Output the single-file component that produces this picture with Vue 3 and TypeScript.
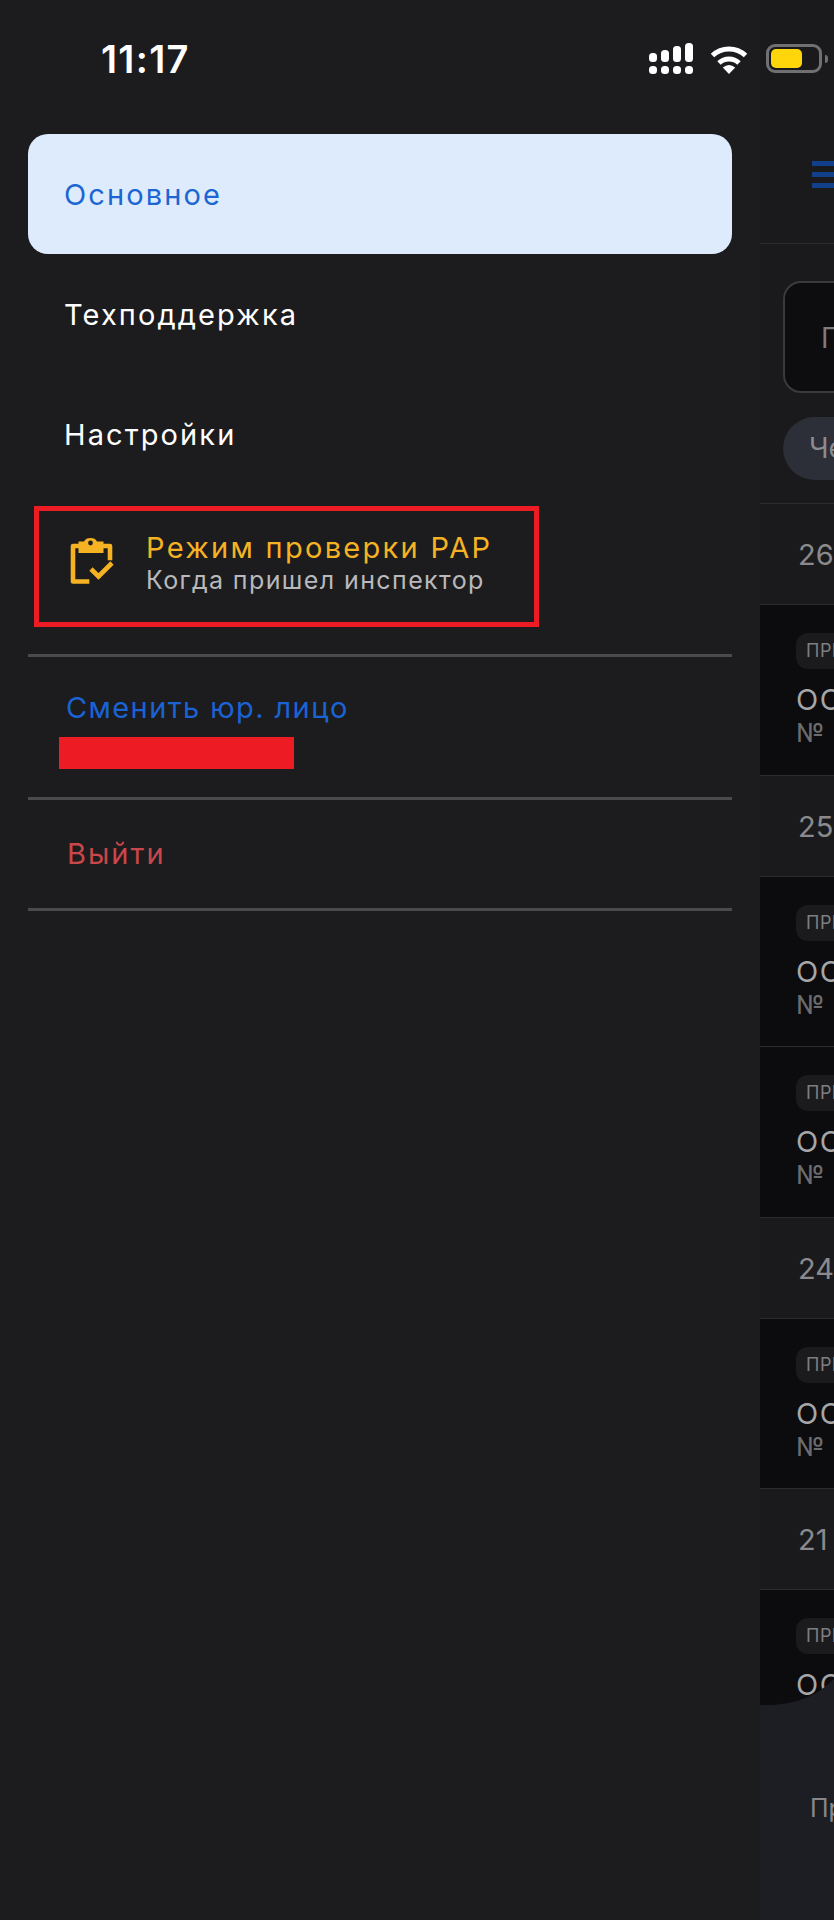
<script setup lang="ts">
interface Row { kind: 'date' | 'card'; label: string }
const menu: string[] = ['Техподдержка', 'Настройки']
const rows: Row[] = [
  { kind: 'date', label: '26' },
  { kind: 'card', label: '№' },
  { kind: 'date', label: '25' },
  { kind: 'card', label: '№' },
  { kind: 'card', label: '№' },
  { kind: 'date', label: '24' },
  { kind: 'card', label: '№' },
  { kind: 'date', label: '21' },
  { kind: 'card', label: '№' }
]
const signalBars: number[] = [9, 12, 16, 19]
</script>

<template>
  <div class="screen">
    <aside class="drawer">
      <div class="item active">Основное</div>
      <div v-for="m in menu" :key="m" class="item">{{ m }}</div>

      <div class="pap">
        <svg class="pap-icon" width="45" height="46" viewBox="0 0 45 46" fill="none">
          <path d="M17 43.5H3V8H40V20" stroke="#f5b324" stroke-width="4.6" stroke-linejoin="round" stroke-linecap="square" />
          <path d="M8.500 3.500H14A7 5.500 0 0 1 27 3.500H33.500V15H8.500Z" fill="#f5b324" />
          <circle cx="20.500" cy="5" r="2.400" fill="#1c1c1e" />
          <path d="M21 31L28.500 38.500 42 25" stroke="#f5b324" stroke-width="4.600" />
        </svg>
        <div class="pap-text">
          <div class="pap-title">Режим проверки РАР</div>
          <div class="pap-sub">Когда пришел инспектор</div>
        </div>
      </div>

      <div class="switch">
        <div class="switch-link">Сменить юр. лицо</div>
        <div class="redacted"></div>
      </div>
      <div class="logout">Выйти</div>
    </aside>

    <main class="page">
      <header class="page-head">
        <span class="burger"><i></i><i></i><i></i></span>
      </header>
      <div class="filters">
        <div class="search">П</div>
        <div class="chip">Че</div>
      </div>
      <section class="list">
        <template v-for="(r, i) in rows" :key="i">
          <div v-if="r.kind === 'date'" class="date">{{ r.label }}</div>
          <div v-else class="card">
            <span class="tag">ПРИ</span>
            <div class="org">ОО</div>
            <div class="num">{{ r.label }}</div>
          </div>
        </template>
      </section>
      <footer class="nav">
        <svg class="nav-curve" width="74" height="27" viewBox="0 0 74 27">
          <path d="M0 27V26H6C30 26 54 20 74 0V27Z" fill="#1d1e23" />
        </svg>
        <span class="nav-label">Пр</span>
      </footer>
    </main>

    <div class="status">
      <span class="time">11:17</span>
      <div class="status-icons">
        <div class="signal">
          <div class="signal-top">
            <i v-for="h in signalBars" :key="h" :style="{ height: h + 'px' }"></i>
          </div>
          <div class="signal-bottom">
            <i v-for="h in signalBars" :key="h"></i>
          </div>
        </div>
        <svg class="wifi" width="38" height="29" viewBox="0 0 38 29" fill="none">
          <path d="M2.500 10.500A24 24 0 0 1 35.500 10.500" stroke="#fff" stroke-width="5" />
          <path d="M9 18A14.500 14.500 0 0 1 29 18" stroke="#fff" stroke-width="5" />
          <path d="M19 29L12.800 22.500Q19 17.500 25.200 22.500Z" fill="#fff" />
        </svg>
        <div class="battery"><span class="battery-fill"></span></div>
        <span class="battery-nub"></span>
      </div>
    </div>
  </div>
</template>

<style>
html, body { margin: 0; background: #1c1c1e; }
</style>

<style scoped>
.screen {
  position: relative;
  display: flex;
  width: 834px;
  height: 1920px;
  overflow: hidden;
  background: #1c1c1e;
  font-family: Inter, "Noto Sans", sans-serif;
}
.drawer {
  width: 760px;
  flex: none;
  box-sizing: border-box;
  padding: 134px 28px 0;
  background: #1c1c1e;
}
.item {
  display: flex;
  align-items: center;
  height: 120px;
  padding-left: 36px;
  font-size: 29px;
  letter-spacing: 2.100px;
  color: #fff;
}
.item.active {
  background: #deebfd;
  border-radius: 20px;
  color: #1a66d2;
}
.pap {
  display: flex;
  align-items: center;
  box-sizing: border-box;
  width: 505px;
  height: 121px;
  margin: 12px 0 27px 6px;
  padding: 0 0 6px 31px;
  border: 5px solid #ed1c24;
}
.pap-icon { flex: none; margin: 0 31px 6px 0; }
.pap-title {
  font-size: 29px;
  line-height: 34px;
  letter-spacing: 2.300px;
  color: #f5b324;
  white-space: nowrap;
}
.pap-sub {
  font-size: 25px;
  line-height: 31px;
  letter-spacing: 1.400px;
  color: #b9b9bb;
  white-space: nowrap;
}
.switch {
  box-sizing: border-box;
  height: 143px;
  padding: 34px 0 0 38px;
  border-top: 3px solid #4a4a4c;
}
.switch-link {
  font-size: 29px;
  line-height: 34px;
  letter-spacing: 1.400px;
  color: #1a63d4;
}
.redacted {
  width: 235px;
  height: 32px;
  margin: 12px 0 0 -7px;
  background: #ed1c24;
}
.logout {
  box-sizing: border-box;
  height: 114px;
  padding: 37px 0 0 39px;
  border-top: 3px solid #4a4a4c;
  border-bottom: 3px solid #4a4a4c;
  font-size: 29px;
  line-height: 34px;
  letter-spacing: 2px;
  color: #c9474a;
}
.page {
  display: flex;
  flex-direction: column;
  width: 74px;
  flex: none;
  background: #1a1a1c;
  white-space: nowrap;
  overflow: hidden;
}
.page-head {
  box-sizing: border-box;
  height: 244px;
  padding: 161px 0 0 52px;
  border-bottom: 1.500px solid #2c2c2e;
}
.burger { display: flex; flex-direction: column; gap: 6.500px; width: 22px; }
.burger i { display: block; height: 4.500px; background: #123f8a; }
.filters {
  box-sizing: border-box;
  height: 260px;
  padding: 37px 0 0 23px;
  border-bottom: 1.500px solid #2c2c2e;
}
.search {
  box-sizing: border-box;
  width: 120px;
  height: 112px;
  padding: 38px 0 0 36px;
  border: 2px solid #3a3a3c;
  border-radius: 18px;
  background: #0d0d0f;
  color: #7c7c7e;
  font-size: 28px;
  line-height: 34px;
}
.chip {
  box-sizing: border-box;
  width: 120px;
  height: 63px;
  margin-top: 24px;
  padding: 14px 0 0 26px;
  border-radius: 32px;
  background: #2c2e38;
  color: #8a8a90;
  font-size: 28px;
  line-height: 34px;
}
.list { height: 1202px; flex: none; overflow: hidden; }
.date {
  box-sizing: border-box;
  height: 101px;
  padding: 33px 0 0 38px;
  border-bottom: 1.500px solid #2c2c2e;
  color: #8a8a8c;
  font-size: 29px;
  line-height: 36px;
}
.card {
  box-sizing: border-box;
  height: 170.500px;
  padding: 28px 0 0 36px;
  background: #0c0c0e;
  border-bottom: 1.500px solid #2c2c2e;
}
.tag {
  display: block;
  box-sizing: border-box;
  width: 80px;
  height: 36px;
  padding-left: 10px;
  border-radius: 12px;
  background: #1b1b1d;
  color: #7e7e80;
  font-size: 18px;
  line-height: 36px;
  letter-spacing: 0.500px;
}
.org {
  margin-top: 14px;
  color: #a6a6a8;
  font-size: 29px;
  line-height: 34px;
  letter-spacing: 1.500px;
}
.num {
  margin-top: 1px;
  color: #6c6c6e;
  font-size: 26px;
  line-height: 30px;
}
.nav {
  position: relative;
  flex: 1;
  background: #1d1e23;
}
.nav-curve { position: absolute; left: 0; bottom: 100%; display: block; }
.nav-label {
  display: block;
  padding: 87px 0 0 50px;
  color: #87878b;
  font-size: 25px;
  line-height: 30px;
}
.status { position: absolute; left: 0; top: 0; width: 834px; height: 90px; }
.time {
  position: absolute;
  left: 101px;
  top: 36px;
  color: #fff;
  font-size: 38px;
  font-weight: 600;
  line-height: 46px;
  letter-spacing: 1.300px;
}
.status-icons {
  position: absolute;
  left: 649px;
  top: 43px;
  display: flex;
  align-items: flex-start;
}
.signal { width: 44px; margin-right: 17px; }
.signal-top, .signal-bottom { display: flex; justify-content: space-between; }
.signal-top { height: 19px; align-items: flex-end; margin-bottom: 4px; }
.signal i { display: block; width: 8px; border-radius: 3.500px; background: #fff; }
.signal-bottom i { height: 8px; }
.wifi { margin: 2px 18px 0 0; }
.battery {
  box-sizing: border-box;
  width: 56px;
  height: 29px;
  margin: 1px 3px 0 0;
  padding: 2px;
  border: 3px solid #707072;
  border-radius: 9px;
}
.battery-fill {
  display: block;
  width: 31px;
  height: 19px;
  border-radius: 5px;
  background: #ffd60a;
}
.battery-nub {
  width: 3px;
  height: 8px;
  margin-top: 12px;
  border-radius: 0 4px 4px 0;
  background: #707072;
}
</style>
